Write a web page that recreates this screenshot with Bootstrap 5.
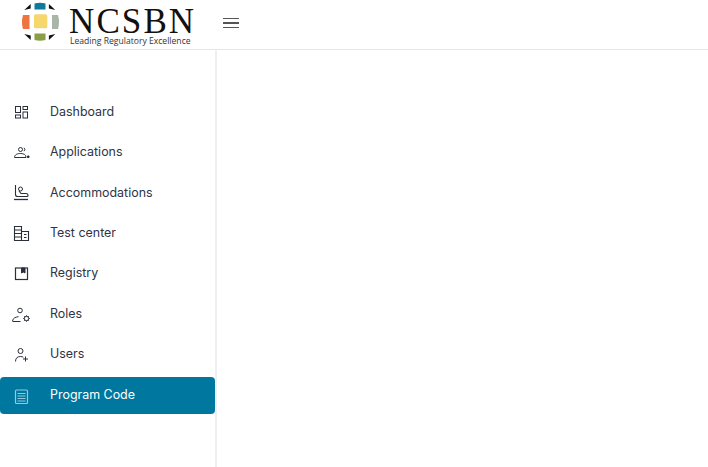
<!DOCTYPE html>
<html lang="en">
<head>
  <meta charset="UTF-8">
  <meta name="viewport" content="width=device-width, initial-scale=1">
  <title>NCSBN</title>
  <link href="https://cdn.jsdelivr.net/npm/bootstrap@5.3.3/dist/css/bootstrap.min.css" rel="stylesheet">
  <style>
    html, body { height: 100%; }
    body { font-family: Inter, "Liberation Sans", sans-serif; background: #fff; overflow: hidden; }
    .top-bar { height: 50px; border-bottom: 1px solid #e4e6ea; padding-left: 22px; }
    .logo-mark { width: 38px; height: 40px; margin-bottom: 8px; flex: none; }
    .logo-words { margin-left: 9px; width: 126px; }
    .logo-name { font-family: "Liberation Serif", serif; font-size: 35px; line-height: 28px; letter-spacing: 2.1px; color: #111; height: 33px; padding-top: 5px; white-space: nowrap; }
    .logo-tag { font-family: "Open Sans", sans-serif; font-size: 8.6px; line-height: 11px; color: #333; white-space: nowrap; margin-left: 1px; }
    .burger { background: none; border: 0; padding: 0; margin-left: 28px; margin-bottom: 3px; width: 16px; height: 10.500px; display: flex; flex-direction: column; justify-content: space-between; }
    .burger span { display: block; height: 1.5px; background: #555; }
    .page-body { height: 417px; }
    .side-menu { width: 217px; border-right: 2px solid #eef0f4; padding-top: 44px; gap: 3.45px; }
    .menu-link { height: 37px; width: 215px; padding-bottom: 1px; color: #2e3346; font-size: 12.45px; border-radius: 0 4px 4px 0; text-decoration: none; }
    .menu-link svg { width: 20px; height: 20px; margin-left: 11px; margin-right: 19px; margin-bottom: 1px; flex: none; fill: none; stroke: #2b2f3a; stroke-width: 1; }
    .menu-link.is-active { background: #00779e; color: #fff; border-radius: 4px; }
    .menu-link.is-active svg { stroke: #8fcbdc; }
  </style>
</head>
<body>

<header class="top-bar d-flex align-items-center">
  <svg class="logo-mark" viewBox="0 0 38 40">
    <rect x="12" y="13.300" width="13.300" height="14" rx="1.500" fill="#f5d76e"/>
    <path d="M12.500 2.500q5.500-1.500 11 0v6h-11z" fill="#0f7a9c"/>
    <path d="M12.500 32.500h11v6.500q-5.500 1.500-11 0z" fill="#8a9f45"/>
    <path d="M1 14h6.500v14h-6.500q-2-7 0-14z" fill="#ee7440"/>
    <path d="M30 14h6q2 7 0 14h-6z" fill="#aab5aa"/>
    <path d="M2.300 9l6.400-6v4.500zM33.300 9l-6.400-6v4.500zM2.300 33l6.400 6v-4.500zM33.300 33l-6.400 6v-4.500z" fill="#111"/>
  </svg>
  <div class="logo-words">
    <div class="logo-name">NCSBN</div>
    <div class="logo-tag">Leading Regulatory Excellence</div>
  </div>
  <button class="burger" type="button" aria-label="Menu"><span></span><span></span><span></span></button>
</header>

<div class="page-body d-flex">
  <nav class="side-menu d-flex flex-column flex-shrink-0">
    <a class="menu-link d-flex align-items-center" href="#">
      <svg viewBox="0 0 20 20"><rect x="4.500" y="4.500" width="5" height="6"/><rect x="12" y="4.500" width="4.500" height="3"/><rect x="4.500" y="13" width="5" height="3"/><rect x="12" y="10" width="4.500" height="6"/></svg>
      Dashboard
    </a>
    <a class="menu-link d-flex align-items-center" href="#">
      <svg viewBox="0 0 20 20"><circle cx="9.500" cy="7.500" r="2"/><path d="M13 5.800a2.300 2.300 0 0 1 0 3.400"/><path d="M3.500 15.500c0-2.800 2.800-4 6-4s5.500 1.200 5.500 3.500v.5z"/><path d="M16.500 14h1.500v1.500h-1.500z" fill="#2b2f3a"/></svg>
      Applications
    </a>
    <a class="menu-link d-flex align-items-center" href="#">
      <svg viewBox="0 0 20 20"><circle cx="9.500" cy="7" r="2"/><path d="M4.500 3v9.500q0 2 2 2h9.500q1 0 1-1 0-2-2-2h-5l-2-2.500" stroke-width="1.100"/><path d="M3 17.500h14" stroke-width="1.300"/></svg>
      Accommodations
    </a>
    <a class="menu-link d-flex align-items-center" href="#">
      <svg viewBox="0 0 20 20"><path d="M3.500 17.500v-14h7v14zM3.500 7h7M3.500 10.500h7M3.500 14h7M10.500 8.500h7v9h-7M13 11.500h2.500M13 14.500h2.500" stroke-width="1.100"/></svg>
      Test center
    </a>
    <a class="menu-link d-flex align-items-center" href="#">
      <svg viewBox="0 0 20 20"><rect x="4.500" y="5" width="12" height="11.500" stroke-width="1.200"/><path d="M10.500 5h3.500v5l-1.750-1-1.750 1z" fill="#2b2f3a"/></svg>
      Registry
    </a>
    <a class="menu-link d-flex align-items-center" href="#">
      <svg viewBox="0 0 20 20"><circle cx="9" cy="6.500" r="2.300"/><path d="M1.500 17c.3-2.800 3-4 6-4.300M1.500 17.500h8"/><circle cx="15.500" cy="14.500" r="2.200"/><path d="M15.500 11.300v1M15.500 16.700v1M12.300 14.500h1M17.700 14.500h1M13.300 12.300l.7.7M17 16l.7.7M13.300 16.700l.7-.7M17 13l.7-.7"/></svg>
      Roles
    </a>
    <a class="menu-link d-flex align-items-center" href="#">
      <svg viewBox="0 0 20 20"><circle cx="9.500" cy="7" r="2.500"/><path d="M4.500 17.500c0-3.500 2-5 5-5 1 0 2 .2 2.800.7M12 15h5M14.500 12.500v5"/></svg>
      Users
    </a>
    <a class="menu-link is-active d-flex align-items-center" href="#">
      <svg viewBox="0 0 20 20"><rect x="4.500" y="5" width="12" height="13.500" rx="1" stroke-width="1.200"/><path d="M6.500 8.500h8M6.500 11h8M6.500 13.500h8M6.500 16h8"/></svg>
      Program Code
    </a>
  </nav>
  <main class="flex-grow-1"></main>
</div>

<script src="https://cdn.jsdelivr.net/npm/bootstrap@5.3.3/dist/js/bootstrap.bundle.min.js"></script>
</body>
</html>
